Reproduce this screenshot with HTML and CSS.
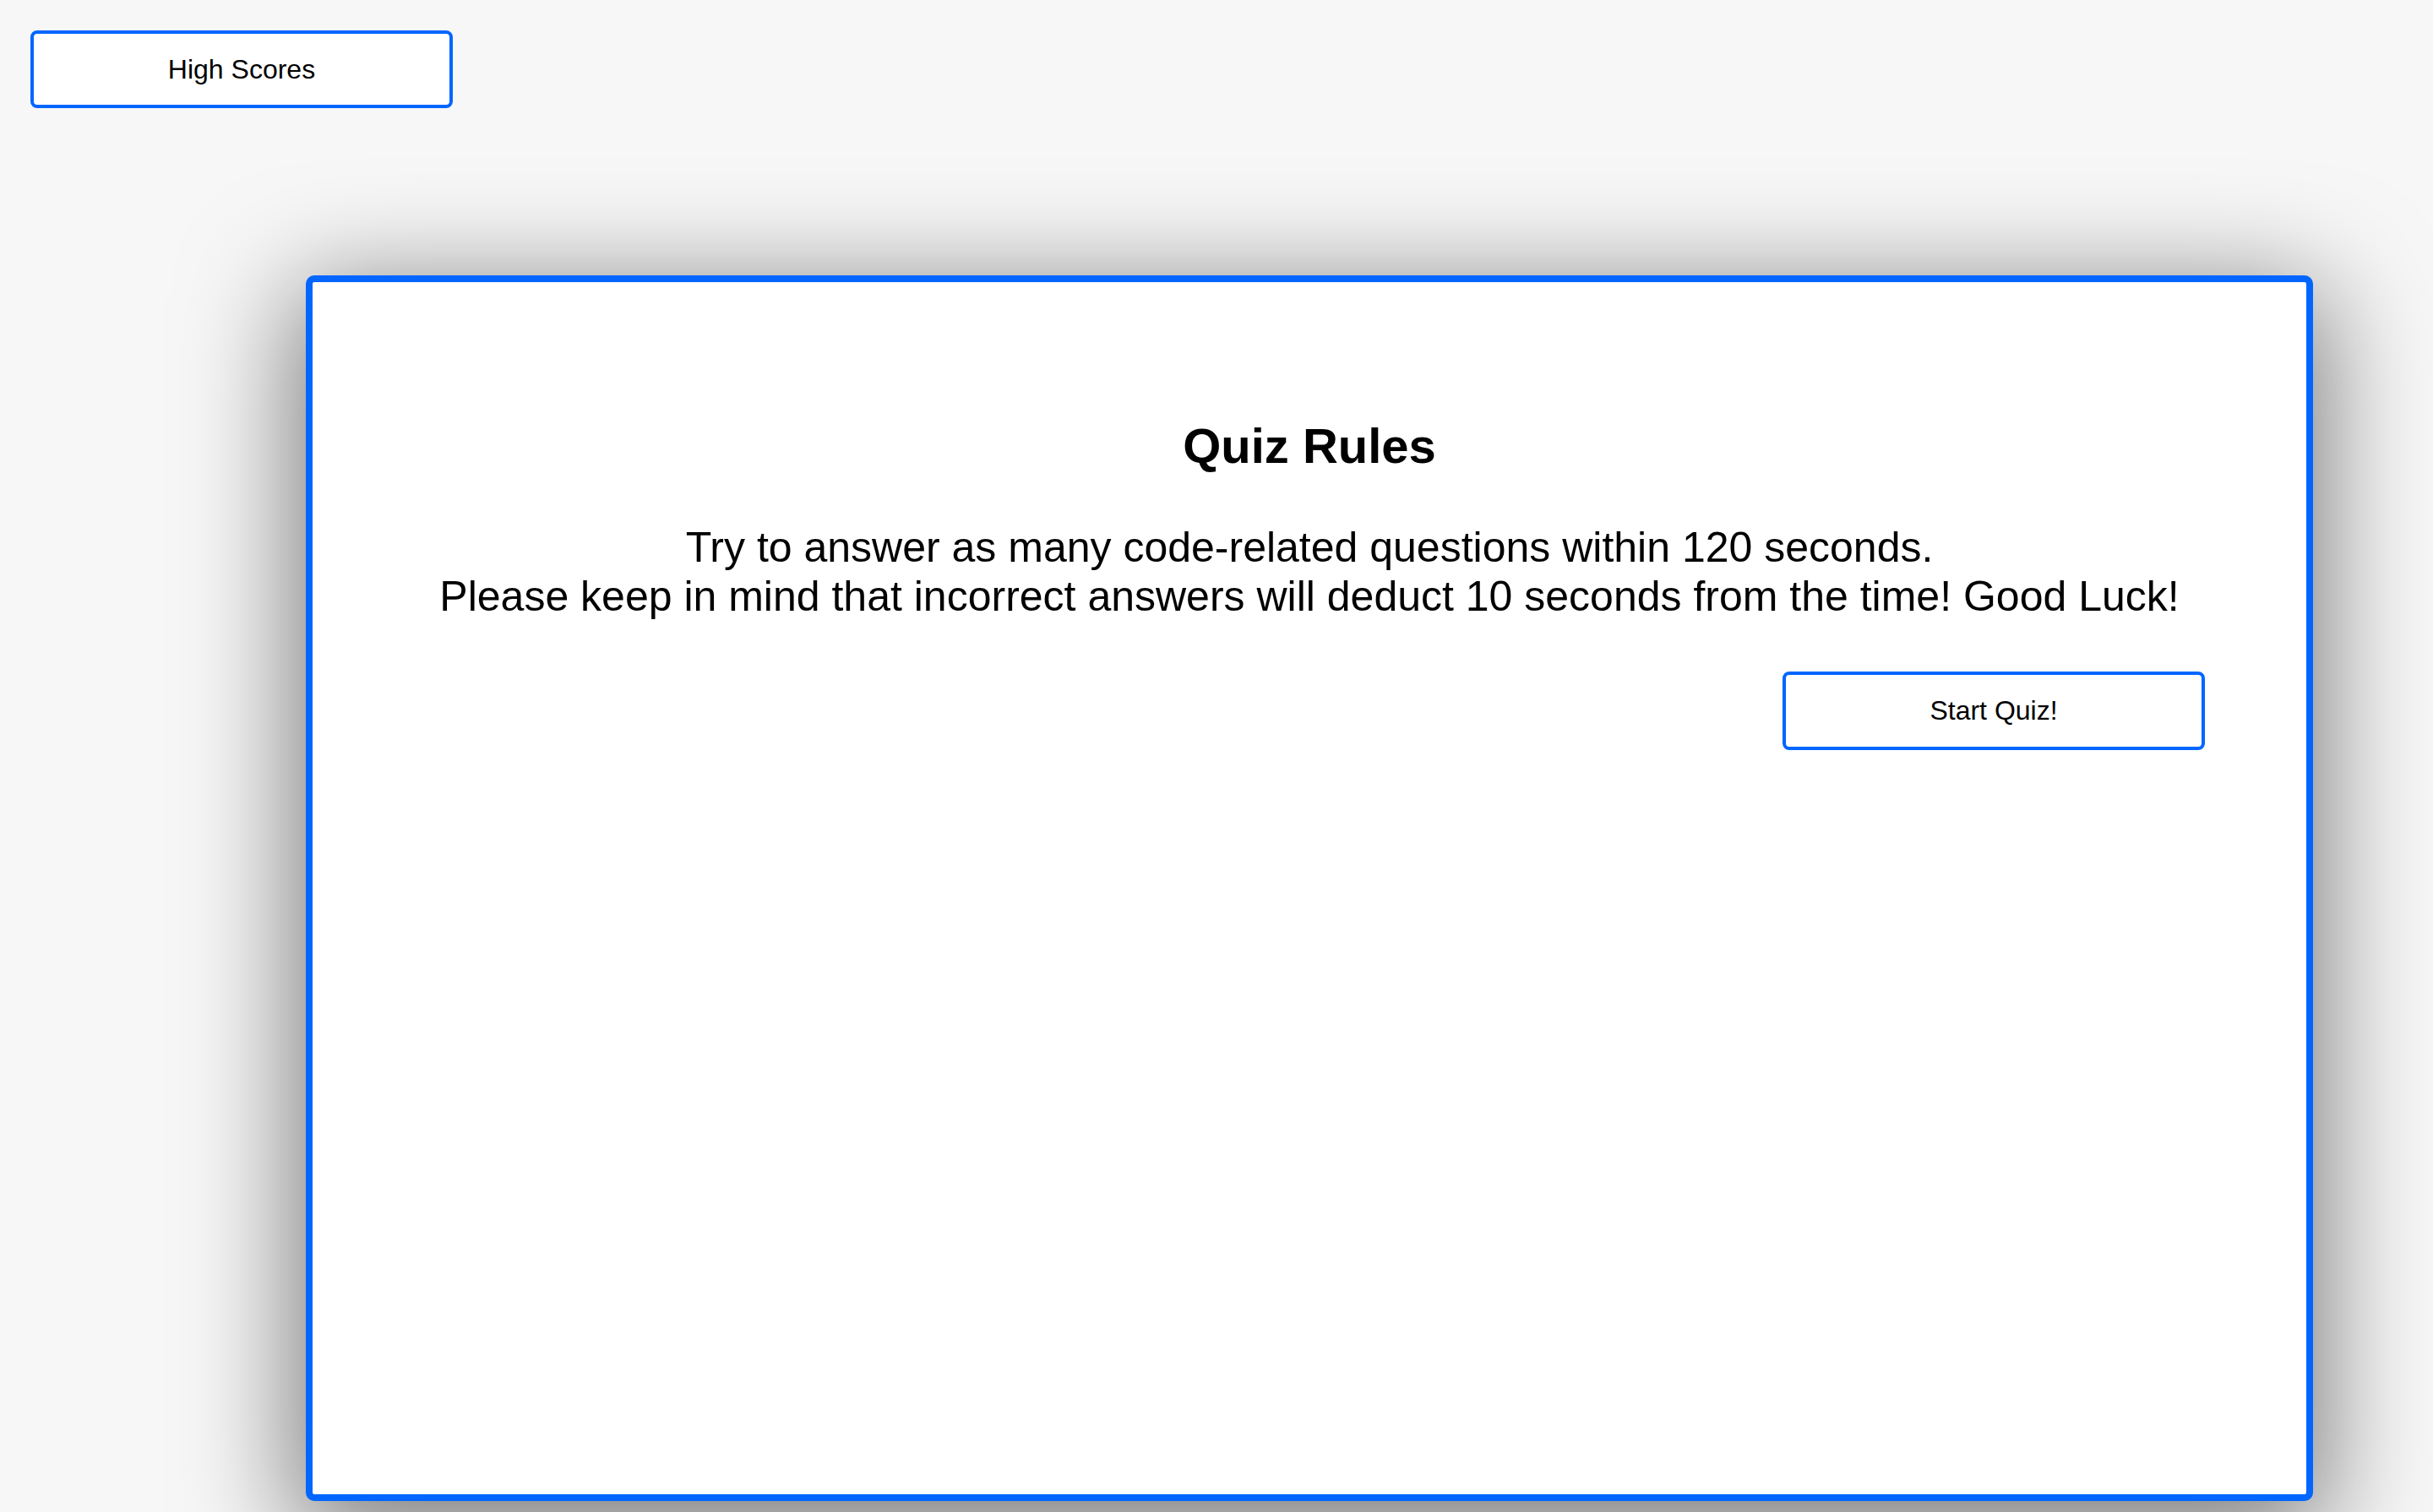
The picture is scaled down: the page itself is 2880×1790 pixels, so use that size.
FILE: index.html
```html
<!DOCTYPE html>
<html lang="en">
<head>
<meta charset="utf-8">
<title>Code Quiz</title>
<link rel="stylesheet" href="styles.css">
</head>
<body>
<header class="top-bar">
  <button class="btn btn-scores" type="button">High Scores</button>
</header>
<main class="card">
  <h1 class="card-title">Quiz Rules</h1>
  <p class="card-text">Try to answer as many code-related questions within 120 seconds.<br>Please keep in mind that incorrect answers will deduct 10 seconds from the time! Good Luck!</p>
  <div class="card-actions">
    <button class="btn btn-start" type="button">Start Quiz!</button>
  </div>
</main>
</body>
</html>
```

FILE: styles.css
```css
html, body {
  margin: 0;
  padding: 0;
  height: 100%;
  overflow: hidden;
}

body {
  background: #f7f7f7;
  font-family: "Liberation Sans", Arial, Helvetica, sans-serif;
  color: #000;
  box-sizing: border-box;
  padding: 36px 0 0 36px;
}

.top-bar {
  display: flex;
}

.btn {
  font-family: "Liberation Sans", Arial, Helvetica, sans-serif;
  font-size: 32px;
  color: #000;
  background: #fff;
  border: 4px solid #0066ff;
  border-radius: 8px;
  width: 500px;
  height: 92px;
  padding: 0;
  margin: 0;
  cursor: pointer;
}

.btn-start {
  height: 93px;
}

.card {
  box-sizing: border-box;
  margin: 198px 0 0 326px;
  width: 2376px;
  height: 1451px;
  background: #fff;
  border: 8px solid #0066ff;
  border-radius: 10px;
  box-shadow: 0 30px 130px 14px rgba(0, 0, 0, 0.5);
  padding: 160px 120px 0 120px;
  display: flex;
  flex-direction: column;
  align-items: stretch;
}

.card-title {
  margin: 0;
  font-size: 58px;
  font-weight: bold;
  text-align: center;
}

.card-text {
  margin: 58px 0 0 0;
  font-size: 50px;
  text-align: center;
}

.card-actions {
  display: flex;
  justify-content: flex-end;
  margin-top: 60px;
}
```
